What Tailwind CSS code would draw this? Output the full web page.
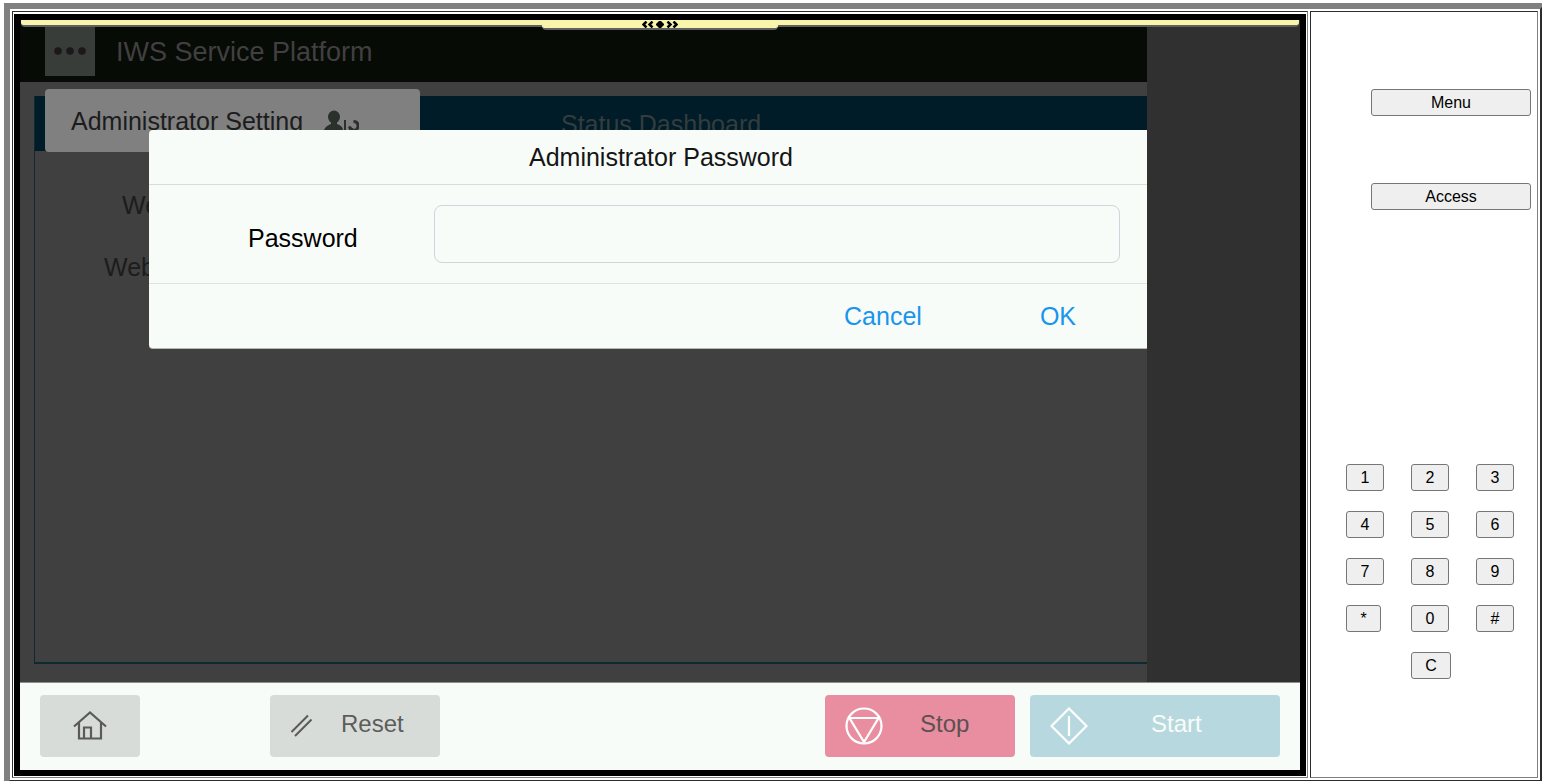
<!DOCTYPE html>
<html lang="en">

<head>
    <meta charset="UTF-8">
    <meta name="viewport" content="width=device-width, initial-scale=1.0">
    <title>IWS Service Platform</title>
    <script src="https://cdn.jsdelivr.net/npm/@tailwindcss/browser@4"></script>
</head>

<body class="flex h-screen overflow-hidden bg-white pl-1 pt-[3px] font-['Liberation_Sans',Arial,sans-serif] text-black">
    <div class="-mr-1 -mb-[5px] flex flex-1 gap-[2px] border-[6px] border-t-[#808080] border-l-[#808080] border-r-[#2c2c2c] border-b-[#2c2c2c] p-[2px]">

        <!-- Remote screen -->
        <div class="flex min-w-0 flex-1 border border-t-[#2c2c2c] border-l-[#2c2c2c] border-r-[#808080] border-b-[#808080] p-px pt-[2px]">
            <div class="relative flex min-w-0 flex-1 flex-col border-[6px] border-black">

                <!-- Pull-down handle -->
                <div class="absolute inset-x-px top-0 z-20 h-[7px] rounded-b border-b-2 border-[#606060] bg-[#f9f4ab]"></div>
                <div class="absolute left-1/2 top-0 z-20 flex h-[10px] w-[236px] -translate-x-1/2 justify-center rounded-b-sm border-b-2 border-[#606060] bg-[#f9f4ab]">
                    <svg class="mt-px h-[7px] w-9" viewBox="0 0 36 7" fill="none" stroke="#000" stroke-width="2.500">
                        <path d="M4.500 .5l-3 3 3 3M10.500 .5l-3 3 3 3M25.500 .5l3 3-3 3M31.500 .5l3 3-3 3" />
                        <path d="M17 0h2l3 3v1l-3 3h-2l-3-3v-1z" fill="#000" stroke="none" />
                    </svg>
                </div>

                <div class="flex min-h-0 flex-1 bg-[#303030]">
                    <main class="relative mr-[153px] flex min-w-0 flex-1 flex-col overflow-hidden bg-[#404040]">
                        <header class="flex h-[62px] items-start bg-[#060b06] pl-[25px]">
                            <button type="button" aria-label="More" class="flex h-14 w-[50px] items-center justify-center bg-[#393d39] pt-[6px]">
                                <svg class="h-2 w-8" viewBox="0 0 32 8" fill="#1c171a">
                                    <circle cx="4" cy="4" r="3.800" />
                                    <circle cx="16" cy="4" r="3.800" />
                                    <circle cx="28" cy="4" r="3.800" />
                                </svg>
                            </button>
                            <h1 class="ml-[21px] pt-4 text-[27px] leading-8 text-[#423f41]">IWS Service Platform</h1>
                        </header>

                        <section class="mb-[18px] ml-[14px] mt-[14px] flex flex-1 flex-col border-b-2 border-l border-[#0d2a33]">
                            <nav class="flex h-[55px] items-end bg-[#001c28] pl-[10px]">
                                <button type="button" class="-mb-px flex h-[63px] w-[375px] items-center rounded-sm bg-[#808080] px-[26px] text-[25px] leading-8 text-[#1c1c1c]">
                                    Administrator Setting
                                    <svg class="ml-5 h-8 w-9" viewBox="0 0 36 32" fill="#2a302b">
                                        <ellipse cx="11" cy="12" rx="6" ry="6.500" />
                                        <path d="M1 32v-7c1-3 4-5 7-6v-3h6v3c3 1 6 3 6 6v7z" />
                                        <path d="M21 15h2v14h-2z" />
                                        <path d="M30.500 16.500c3 0 4.500 2 4.500 4.500s-2 4.500-4.500 4.500S27 24 26.500 21.500" fill="none" stroke="#2a302b" stroke-width="3" />
                                        <path d="M26 21l5 3-3 6h-2z" />
                                    </svg>
                                </button>
                                <button type="button" class="ml-[141px] flex h-full items-center text-[25px] leading-8 text-[#333c3e]">Status Dashboard</button>
                            </nav>
                            <dl class="flex w-[126px] flex-col gap-[30px] pt-[38px] text-[25px] leading-8 text-[#1c1c1c]">
                                <dt class="pl-[87px]">Web</dt>
                                <dt class="pl-[69px]">Web</dt>
                            </dl>
                        </section>

                        <!-- Password dialog, runs past the edge of the screen area -->
                        <form role="dialog" aria-labelledby="dialogTitle" class="absolute -right-[26px] left-[129px] top-[110px] flex flex-col rounded-sm border-b border-[#b5b8b5] bg-[#f8fcf8] text-[25px] leading-8">
                            <h2 id="dialogTitle" class="flex h-[55px] items-center justify-center border-b border-[#d8dcdc] text-[#151515]">Administrator Password</h2>
                            <div class="flex h-[99px] items-center border-b border-[#dde2e2] pl-[99px] pr-[53px]">
                                <label for="password" class="w-[186px] pt-2">Password</label>
                                <input type="password" id="password" class="h-[58px] min-w-0 flex-1 rounded-lg border border-[#cdd6da] bg-transparent px-3">
                            </div>
                            <div class="flex h-16 items-center justify-end gap-[118px] pr-[97px] text-[#1895ec]">
                                <button type="button">Cancel</button>
                                <button type="submit">OK</button>
                            </div>
                        </form>
                    </main>
                </div>

                <!-- Hardware-style function keys -->
                <footer class="flex h-[88px] items-start border-t border-[#8c8f8c] bg-[#f8fcf8] px-5 pt-3 text-[24px] leading-8">
                    <button type="button" aria-label="Home" class="flex h-[62px] w-[100px] items-center justify-center rounded-sm bg-[#d8dcd8]">
                        <svg class="h-8 w-[34px]" viewBox="0 0 34 32" fill="none" stroke="#5a5a5a" stroke-width="2.200">
                            <path d="M1 16.500L17 2.500l16 14M6 12.500v16h22v-16M11 28.500v-11h7v11" />
                        </svg>
                    </button>
                    <button type="button" class="ml-[130px] flex h-[62px] w-[170px] items-center rounded-sm bg-[#d8dcd8] pl-5 text-[#5c5c5c]">
                        <svg class="h-6 w-6" viewBox="0 0 24 24" fill="none" stroke="#5a5a5a" stroke-width="2">
                            <path d="M1.500 18L18 1.500M5 22L21.500 5.500" />
                        </svg>
                        <span class="-mt-1 ml-[27px]">Reset</span>
                    </button>
                    <button type="button" class="ml-auto flex h-[62px] w-[190px] items-center rounded-sm bg-[#e88ea0] pl-5 text-[#5c5052]">
                        <svg class="h-[38px] w-[38px]" viewBox="0 0 38 38" fill="none" stroke="#fff" stroke-width="2.200">
                            <circle cx="19" cy="19" r="17.500" />
                            <path d="M4.500 11h29L19 35z" />
                        </svg>
                        <span class="-mt-1 ml-[37px]">Stop</span>
                    </button>
                    <button type="button" class="ml-[15px] flex h-[62px] w-[250px] items-center rounded-sm bg-[#b8d8e0] pl-5 text-[#f8fcf8]">
                        <svg class="h-[38px] w-[38px]" viewBox="0 0 38 38" fill="none" stroke="#fff" stroke-width="2.200">
                            <path d="M19 1.500L36.500 19 19 36.500 1.500 19zM19 9v20" />
                        </svg>
                        <span class="-mt-1 ml-[63px]">Start</span>
                    </button>
                </footer>
            </div>
        </div>

        <!-- Panel keys -->
        <aside class="flex w-[228px] flex-col border border-t-[#2c2c2c] border-l-[#2c2c2c] border-r-[#808080] border-b-[#808080] pt-[77px] text-base leading-5">
            <div class="flex flex-col items-end gap-[67px] pr-[6px]">
                <button type="button" class="h-[27px] w-40 rounded-[3px] border border-[#767676] bg-[#efefef]">Menu</button>
                <button type="button" class="h-[27px] w-40 rounded-[3px] border border-[#767676] bg-[#efefef]">Access</button>
            </div>
            <div class="ml-[35px] mt-[254px] grid grid-cols-[38px_38px_38px] gap-x-[27px] gap-y-5">
                <button type="button" class="h-[27px] w-[38px] rounded-[3px] border border-[#767676] bg-[#efefef]">1</button>
                <button type="button" class="h-[27px] w-[38px] rounded-[3px] border border-[#767676] bg-[#efefef]">2</button>
                <button type="button" class="h-[27px] w-[38px] rounded-[3px] border border-[#767676] bg-[#efefef]">3</button>
                <button type="button" class="h-[27px] w-[38px] rounded-[3px] border border-[#767676] bg-[#efefef]">4</button>
                <button type="button" class="h-[27px] w-[38px] rounded-[3px] border border-[#767676] bg-[#efefef]">5</button>
                <button type="button" class="h-[27px] w-[38px] rounded-[3px] border border-[#767676] bg-[#efefef]">6</button>
                <button type="button" class="h-[27px] w-[38px] rounded-[3px] border border-[#767676] bg-[#efefef]">7</button>
                <button type="button" class="h-[27px] w-[38px] rounded-[3px] border border-[#767676] bg-[#efefef]">8</button>
                <button type="button" class="h-[27px] w-[38px] rounded-[3px] border border-[#767676] bg-[#efefef]">9</button>
                <button type="button" class="h-[27px] w-[35px] rounded-[3px] border border-[#767676] bg-[#efefef]">*</button>
                <button type="button" class="h-[27px] w-[38px] rounded-[3px] border border-[#767676] bg-[#efefef]">0</button>
                <button type="button" class="h-[27px] w-[38px] rounded-[3px] border border-[#767676] bg-[#efefef]">#</button>
                <button type="button" class="col-start-2 h-[27px] w-10 rounded-[3px] border border-[#767676] bg-[#efefef]">C</button>
            </div>
        </aside>
    </div>
</body>

</html>
